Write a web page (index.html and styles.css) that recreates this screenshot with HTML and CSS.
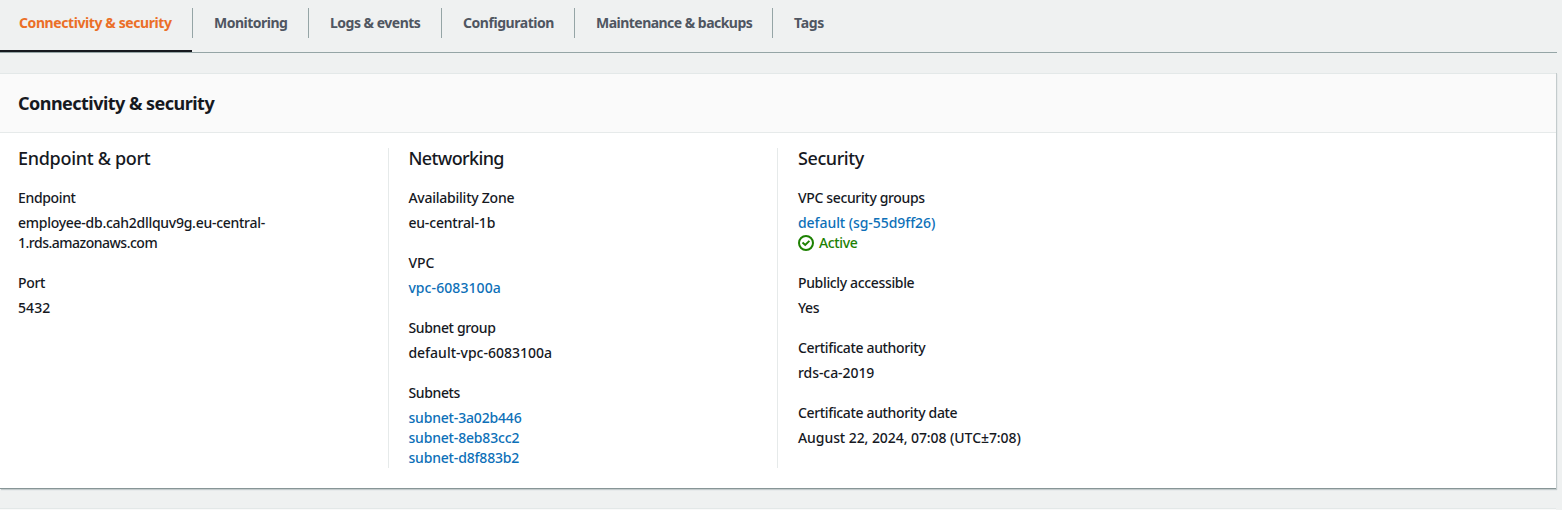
FILE: index.html
```html
<!DOCTYPE html>
<html lang="en">
<head>
<meta charset="utf-8">
<title>Connectivity &amp; security</title>
<link rel="stylesheet" href="styles.css">
</head>
<body>
<nav class="tabs">
  <a class="tab tab-active"><span>Connectivity &amp; security</span></a>
  <a class="tab tab-monitoring"><span>Monitoring</span></a>
  <a class="tab tab-logs"><span>Logs &amp; events</span></a>
  <a class="tab tab-configuration"><span>Configuration</span></a>
  <a class="tab tab-maintenance"><span>Maintenance &amp; backups</span></a>
  <a class="tab tab-tags"><span>Tags</span></a>
</nav>
<main class="card">
  <header class="card-header"><h2>Connectivity &amp; security</h2></header>
  <div class="columns">
    <section class="column">
      <h3>Endpoint &amp; port</h3>
      <dl>
        <div class="field"><dt>Endpoint</dt><dd><span class="host">employee-db.cah2dllquv9g.eu-central-</span><br><span class="domain">1.rds.amazonaws.com</span></dd></div>
        <div class="field"><dt>Port</dt><dd class="digits">5432</dd></div>
      </dl>
    </section>
    <section class="column">
      <h3 class="h-networking">Networking</h3>
      <dl>
        <div class="field"><dt class="zone-label">Availability Zone</dt><dd>eu-central-1b</dd></div>
        <div class="field"><dt class="vpc-label">VPC</dt><dd class="digits"><a class="link">vpc-6083100a</a></dd></div>
        <div class="field"><dt>Subnet group</dt><dd class="group-name">default-vpc-6083100a</dd></div>
        <div class="field"><dt>Subnets</dt><dd><a class="link">subnet-3a02b446</a><br><a class="link">subnet-8eb83cc2</a><br><a class="link">subnet-d8f883b2</a></dd></div>
      </dl>
    </section>
    <section class="column">
      <h3 class="h-security">Security</h3>
      <dl>
        <div class="field"><dt>VPC security groups</dt><dd class="wide"><a class="link">default (sg-55d9ff26)</a>
          <div class="status"><svg class="status-icon" viewBox="0 0 16 16"><circle cx="8" cy="8" r="7"/><path d="M4.5 7.6 7.2 10 11.4 5.9"/></svg><span>Active</span></div></dd></div>
        <div class="field"><dt>Publicly accessible</dt><dd class="short">Yes</dd></div>
        <div class="field"><dt>Certificate authority</dt><dd class="wide">rds-ca-2019</dd></div>
        <div class="field"><dt>Certificate authority date</dt><dd class="wide">August 22, 2024, 07:08 (UTC±7:08)</dd></div>
      </dl>
    </section>
  </div>
</main>
<div class="next-card"></div>
</body>
</html>
```
FILE: styles.css
```css
* { box-sizing: border-box; }
body {
  margin: 0;
  height: 510px;
  overflow: hidden;
  background: #eff1f1;
  color: #16191f;
  font: 500 14px/20px "Noto Sans", sans-serif;
  letter-spacing: -0.35px;
}
.tabs {
  display: flex;
  width: 1557px;
  height: 53px;
  padding-top: 8px;
  border-bottom: 1px solid #95a5a6;
}
.tab {
  height: 30px;
  padding: 5px 0 0 21px;
  border-right: 1px solid #95a5a6;
  color: #4f5661;
  font-weight: 700;
  letter-spacing: -0.5px;
  white-space: nowrap;
}
.tab-active {
  position: relative;
  width: 193px;
  padding-left: 19px;
  color: #eb6f27;
  letter-spacing: -0.41px;
}
.tab-active::after {
  content: "";
  position: absolute;
  left: 0;
  top: 42px;
  width: 192px;
  height: 2px;
  background: #16191f;
}
.tab-monitoring { width: 116px; }
.tab-logs { width: 133px; }
.tab-configuration { width: 133px; letter-spacing: -0.45px; }
.tab-maintenance { width: 198px; letter-spacing: -0.53px; }
.tab-tags { border-right: 0; letter-spacing: -0.3px; }
.card {
  width: 1556px;
  height: 416px;
  margin-top: 20px;
  background: #fff;
  border-top: 1px solid #e3e8e8;
  border-bottom: 1px solid #879596;
  box-shadow: 1px 0 0 #c3cbcc, 1px 1px 1px #c3cbcc;
}
.card-header {
  height: 59px;
  padding: 17px 18px;
  background: #fafafa;
  border-bottom: 1px solid #e6eaea;
}
h2, h3, dl, dd { margin: 0; }
h2 { font-size: 18px; line-height: 24px; letter-spacing: -0.53px; }
.columns { display: flex; padding-top: 15px; }
.column { width: 389px; height: 320px; padding-left: 20px; border-left: 1px solid #e6eaea; }
.column:first-child { width: 388px; padding-left: 18px; border-left: 0; }
.column:nth-child(2) { padding-left: 19.4px; }
h3 { font-size: 18px; font-weight: 500; line-height: 20px; letter-spacing: -0.3px; }
.h-networking { letter-spacing: -0.62px; }
.h-security { letter-spacing: -0.42px; }
dl { display: grid; gap: 20px; margin-top: 20px; }
dt { margin-bottom: 5px; }
.zone-label { letter-spacing: -0.24px; }
.vpc-label { letter-spacing: -0.05px; }
dd { letter-spacing: -0.17px; }
.host { letter-spacing: -0.27px; }
.domain { letter-spacing: -0.5px; }
.digits { letter-spacing: 0.08px; }
.group-name { letter-spacing: 0; }
.wide { letter-spacing: -0.07px; }
.short { letter-spacing: -0.4px; }
.link { color: #0d70b8; }
.status { display: flex; align-items: center; gap: 5px; color: #1d8102; letter-spacing: -0.35px; }
.status-icon { width: 16px; height: 16px; fill: none; stroke: currentColor; stroke-width: 2; }
.next-card { width: 1556px; height: 2px; margin-top: 19px; background: #fafafa; border-top: 1px solid #e3e8e8; }
```
